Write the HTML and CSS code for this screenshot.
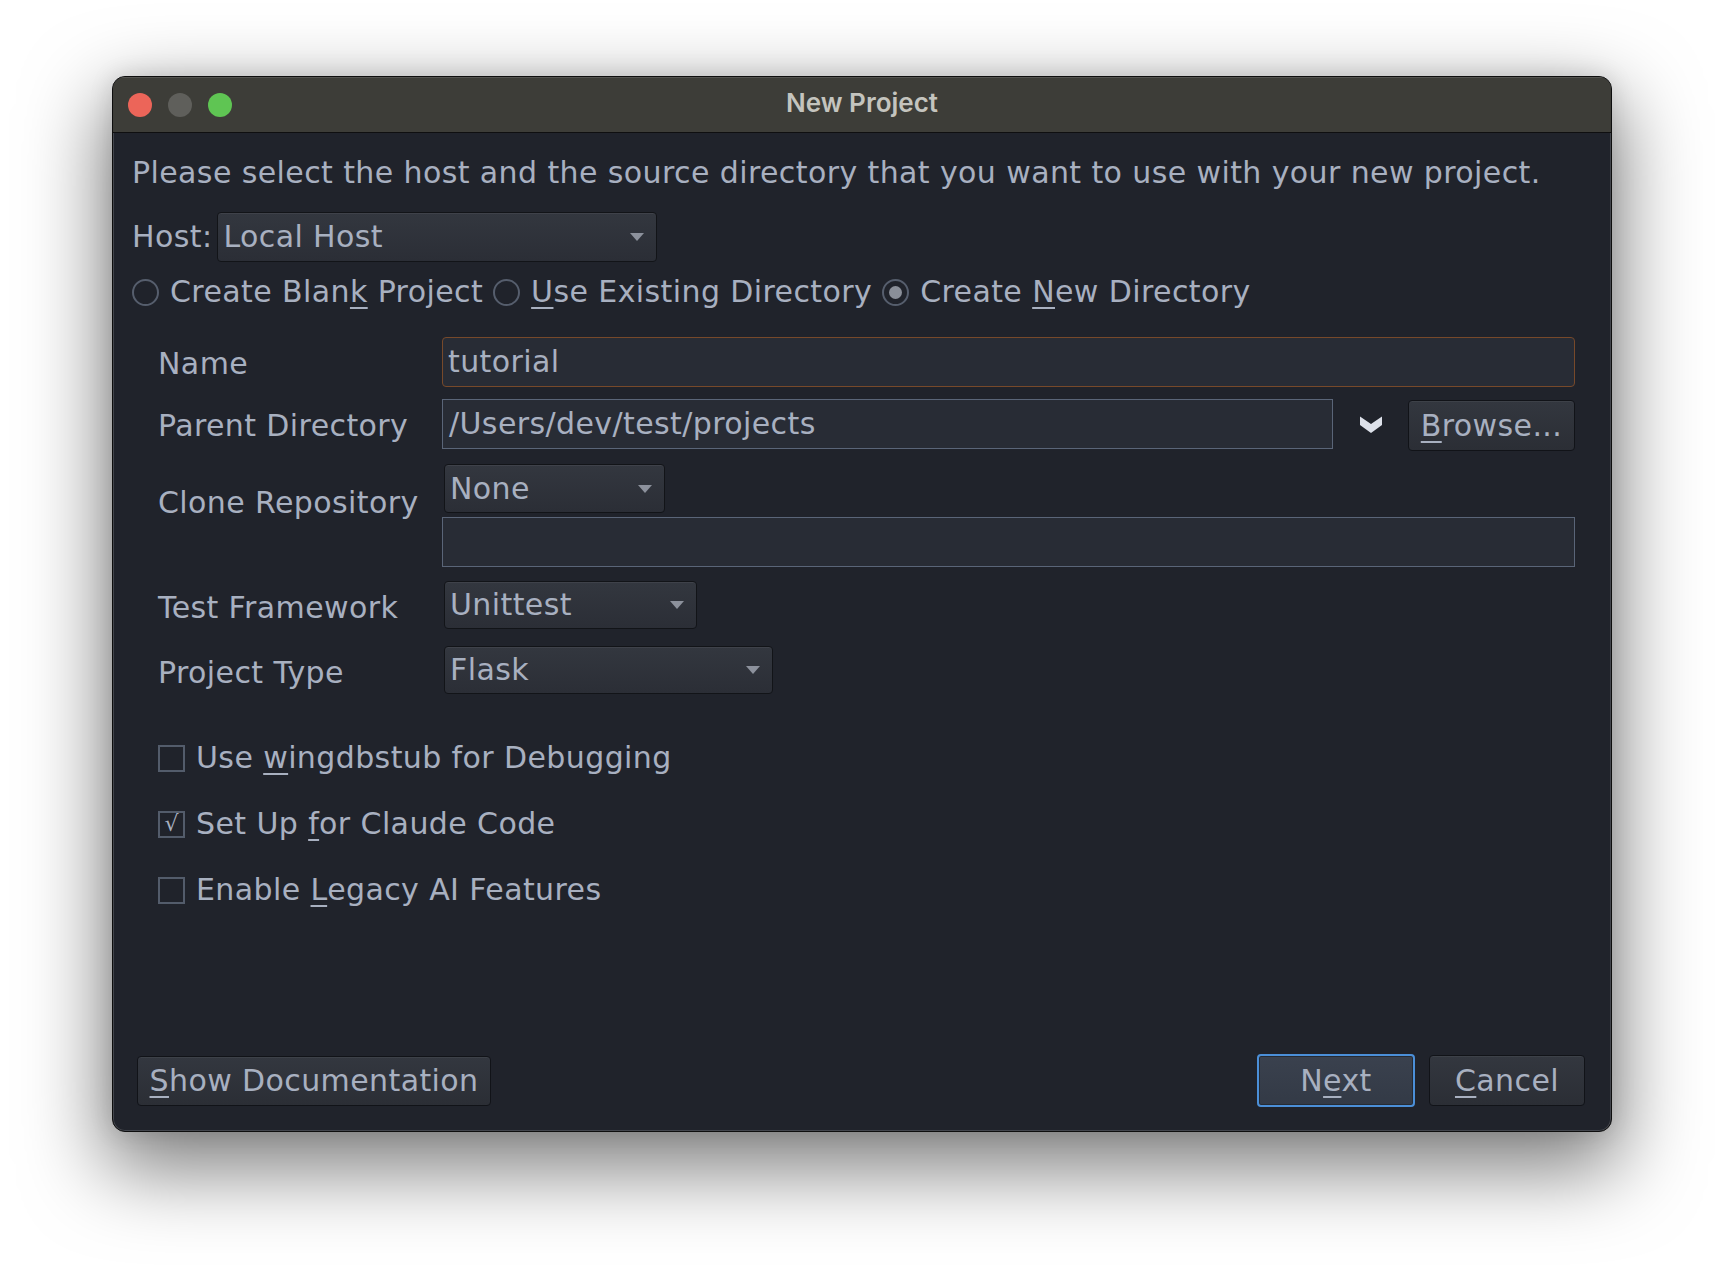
FILE: index.html
```html
<!DOCTYPE html>
<html>
<head>
<meta charset="utf-8">
<title>New Project</title>
<link rel="stylesheet" href="styles.css">
</head>
<body>
<div class="window">
  <div class="titlebar">
    <div class="lights">
      <span class="light red"></span>
      <span class="light gray"></span>
      <span class="light green"></span>
    </div>
    <div class="title">New Project</div>
    <div></div>
  </div>
  <div class="content">
    <p class="intro">Please select the host and the source directory that you want to use with your new project.</p>

    <div class="host-row">
      <span class="host-label">Host:</span>
      <div class="combo combo-host">
        <span>Local Host</span>
        <svg class="arrow" width="14" height="8" viewBox="0 0 14 8"><polygon points="0,0 14,0 7,8"/></svg>
      </div>
    </div>

    <div class="radio-row">
      <div class="radio"><span class="radio-circle"></span><span>Create Blan<u>k</u> Project</span></div>
      <div class="radio"><span class="radio-circle"></span><span><u>U</u>se Existing Directory</span></div>
      <div class="radio"><span class="radio-circle checked"><span class="dot"></span></span><span>Create <u>N</u>ew Directory</span></div>
    </div>

    <div class="form">
      <div class="row row-name">
        <span class="label">Name</span>
        <div class="field field-focus">tutorial</div>
      </div>
      <div class="row row-dir">
        <span class="label">Parent Directory</span>
        <div class="field field-dir">/Users/dev/test/projects</div>
        <div class="chevron-zone">
          <svg width="22" height="17" viewBox="0 0 22 17"><polygon points="0,0.5 11,8 22,0.5 22,9 11,17 0,9"/></svg>
        </div>
        <div class="btn btn-browse"><u>B</u>rowse...</div>
      </div>
      <div class="row row-clone">
        <span class="label label-clone">Clone Repository</span>
        <div class="clone-controls">
          <div class="combo combo-none">
            <span>None</span>
            <svg class="arrow" width="14" height="8" viewBox="0 0 14 8"><polygon points="0,0 14,0 7,8"/></svg>
          </div>
          <div class="field field-url"></div>
        </div>
      </div>
      <div class="row row-test">
        <span class="label">Test Framework</span>
        <div class="combo combo-test">
          <span>Unittest</span>
          <svg class="arrow" width="14" height="8" viewBox="0 0 14 8"><polygon points="0,0 14,0 7,8"/></svg>
        </div>
      </div>
      <div class="row row-type">
        <span class="label">Project Type</span>
        <div class="combo combo-type">
          <span>Flask</span>
          <svg class="arrow" width="14" height="8" viewBox="0 0 14 8"><polygon points="0,0 14,0 7,8"/></svg>
        </div>
      </div>
    </div>

    <div class="checks">
      <div class="check"><span class="box"></span><span>Use <u>w</u>ingdbstub for Debugging</span></div>
      <div class="check"><span class="box"><span class="tick">√</span></span><span>Set Up <u>f</u>or Claude Code</span></div>
      <div class="check"><span class="box"></span><span>Enable <u>L</u>egacy AI Features</span></div>
    </div>

    <div class="footer">
      <div class="btn btn-doc"><u>S</u>how Documentation</div>
      <div class="spacer"></div>
      <div class="btn btn-next">N<u>e</u>xt</div>
      <div class="btn btn-cancel"><u>C</u>ancel</div>
    </div>
  </div>
</div>
</body>
</html>
```

FILE: styles.css
```css
html, body {
  margin: 0;
  padding: 0;
  background: #ffffff;
}

body {
  width: 1724px;
  height: 1280px;
  overflow: hidden;
  font-family: "DejaVu Sans", "Liberation Sans", sans-serif;
}

.window {
  width: 1500px;
  height: 1056px;
  margin: 76px 0 0 112px;
  box-sizing: border-box;
  border: 1px solid #0e0e0e;
  border-radius: 13px;
  background: #20232b;
  box-shadow: 0 30px 80px 8px rgba(0, 0, 0, 0.5), 0 0 24px rgba(0, 0, 0, 0.12), inset 0 0 0 1px rgba(255, 255, 255, 0.16);
  display: flex;
  flex-direction: column;
  overflow: hidden;
}

/* Title bar */
.titlebar {
  height: 56px;
  flex: none;
  box-sizing: border-box;
  border-bottom: 1px solid #0f0f10;
  background: #3d3d38;
  box-shadow: inset 0 1px 0 rgba(255, 255, 255, 0.12);
  display: grid;
  grid-template-columns: 1fr auto 1fr;
  align-items: center;
}

.lights {
  display: flex;
  gap: 16px;
  padding-left: 15px;
}

.light {
  width: 24px;
  height: 24px;
  border-radius: 50%;
  display: block;
}

.red { background: #ec6559; }
.gray { background: #5f5f5b; }
.green { background: #5fc553; }

.title {
  font-family: "Inter", "Liberation Sans", sans-serif;
  font-weight: 600;
  font-size: 26px;
  color: #c4c4be;
  padding-bottom: 4px;
}

/* Content */
.content {
  flex: 1;
  display: flex;
  flex-direction: column;
  padding: 20px 0 24px 19px;
  font-size: 30px;
  letter-spacing: 0.4px;
  color: #a8b0c0;
}

u {
  text-decoration-thickness: 2px;
  text-underline-offset: 5px;
}

.intro {
  margin: 0;
  line-height: 40px;
  white-space: nowrap;
}

.host-row {
  display: flex;
  align-items: center;
  margin-top: 19px;
  height: 50px;
}

.host-label {
  line-height: 50px;
  margin-right: 5px;
}

.combo {
  box-sizing: border-box;
  border: 1px solid #121418;
  border-radius: 4px;
  background: linear-gradient(#33373f, #2b2e36);
  box-shadow: inset 0 1px 0 rgba(255, 255, 255, 0.06);
  display: flex;
  align-items: center;
  justify-content: space-between;
  padding: 0 12px 0 5px;
  line-height: 46px;
  flex: none;
}

.arrow {
  fill: #8c919c;
  display: block;
}

.combo-host {
  width: 440px;
  height: 50px;
}

/* Radios */
.radio-row {
  display: flex;
  align-items: center;
  height: 44px;
  margin-top: 8px;
  gap: 10px;
}

.radio {
  display: flex;
  align-items: center;
  gap: 11px;
  line-height: 44px;
}

.radio-circle {
  width: 27px;
  height: 27px;
  box-sizing: border-box;
  border: 2px solid #565e6d;
  border-radius: 50%;
  display: grid;
  place-items: center;
  flex: none;
}

.dot {
  width: 13px;
  height: 13px;
  border-radius: 50%;
  background: #8a8f99;
  display: block;
}

/* Form */
.form {
  margin-top: 23px;
  margin-left: 26px;
  width: 1417px;
  display: flex;
  flex-direction: column;
}

.row {
  display: flex;
  align-items: flex-start;
}

.label {
  width: 284px;
  flex: none;
  height: 50px;
  box-sizing: border-box;
  padding-top: 2px;
  line-height: 50px;
  white-space: nowrap;
}

.field {
  box-sizing: border-box;
  height: 50px;
  border: 1px solid #5a6578;
  background: #282c35;
  padding-left: 6px;
  line-height: 48px;
  flex: 1;
}

.field-focus {
  border-color: #77492a;
  border-radius: 4px;
  padding-left: 5px;
}

.row-dir {
  margin-top: 12px;
}

.field-dir {
  flex: none;
  width: 891px;
}

.chevron-zone {
  width: 75px;
  height: 50px;
  flex: none;
  display: flex;
  align-items: center;
  justify-content: center;
}

.chevron-zone svg {
  fill: #dde1ea;
  display: block;
}

.btn {
  box-sizing: border-box;
  border: 1px solid #111318;
  border-radius: 4px;
  background: linear-gradient(#33373f, #2b2e35);
  box-shadow: inset 0 1px 0 rgba(255, 255, 255, 0.05);
  text-align: center;
  white-space: nowrap;
  flex: none;
}

.btn-browse {
  width: 167px;
  height: 51px;
  line-height: 49px;
  margin-top: 1px;
}

.row-clone {
  margin-top: 13px;
}

.label-clone {
  margin-top: 12px;
}

.clone-controls {
  flex: 1;
  display: flex;
  flex-direction: column;
}

.combo-none {
  width: 221px;
  height: 49px;
  margin-left: 2px;
}

.field-url {
  flex: none;
  margin-top: 4px;
}

.row-test {
  margin-top: 14px;
}

.combo-test {
  width: 253px;
  height: 48px;
  margin-left: 2px;
}

.row-type {
  margin-top: 15px;
}

.combo-type {
  width: 329px;
  height: 48px;
  margin-left: 2px;
}

/* Checkboxes */
.checks {
  margin-top: 40px;
  margin-left: 26px;
  display: flex;
  flex-direction: column;
  gap: 22px;
}

.check {
  display: flex;
  align-items: center;
  gap: 11px;
  height: 44px;
  line-height: 44px;
}

.box {
  width: 27px;
  height: 27px;
  box-sizing: border-box;
  border: 2px solid #535c6b;
  display: grid;
  place-items: center;
  flex: none;
}

.tick {
  font-size: 22px;
  line-height: 22px;
  letter-spacing: 0;
  color: #a8b0c0;
  display: block;
}

/* Footer */
.footer {
  margin-top: auto;
  display: flex;
  align-items: center;
  padding: 0 26px 0 5px;
}

.spacer {
  flex: 1;
}

.btn-doc {
  width: 354px;
  height: 50px;
  line-height: 48px;
}

.btn-next {
  width: 158px;
  height: 53px;
  line-height: 49px;
  border: 2px solid #4b8fd8;
  background: linear-gradient(#3a414e, #333a46);
  box-shadow: inset 0 0 0 1px #262b33;
}

.btn-cancel {
  width: 156px;
  height: 51px;
  line-height: 49px;
  margin-left: 14px;
}
```
